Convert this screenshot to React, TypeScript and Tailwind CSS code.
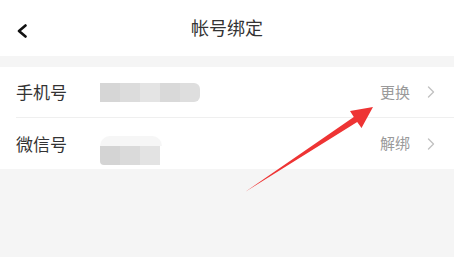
// 帐号绑定 - account binding settings screen

const cjk = { fontFamily: '"Noto Sans CJK SC", "Noto Sans", sans-serif' };

function Chevron() {
  return (
    <svg className="w-[8px] h-[12px]" viewBox="0 0 8 12" fill="none" stroke="#c2c2c2" strokeWidth={1.4}>
      <path d="M1.5 1l5 5-5 5" strokeLinecap="round" strokeLinejoin="round" />
    </svg>
  );
}

function Blur({ shades, rounded, shift }: { shades: string[]; rounded?: boolean; shift?: boolean }) {
  return (
    <div className={`flex flex-col ${shift ? "mt-[13px]" : ""}`}>
      {shift && <div className="h-[10px] w-[62px] rounded-t-[10px] bg-[#f6f6f6]" />}
      <div className={`flex h-[19px] overflow-hidden ${rounded ? "rounded-r-[6px]" : "rounded-bl-[4px]"}`}>
        {shades.map((c, i) => (
          <div key={i} className="w-[20px] h-full" style={{ backgroundColor: c }} />
        ))}
      </div>
    </div>
  );
}

function Row({
  label,
  action,
  shades,
  rounded,
  divider,
  shift,
}: {
  label: string;
  action: string;
  shades: string[];
  rounded?: boolean;
  divider?: boolean;
  shift?: boolean;
}) {
  return (
    <div className="pl-4">
      <div className={`flex items-center h-[51px] pr-[19px] ${divider ? "border-b border-[#efefef]" : ""}`}>
        <span className="w-[84px] text-[17px] text-[#333]">{label}</span>
        <Blur shades={shades} rounded={rounded} shift={shift} />
        <span className="ml-auto text-[15px] text-[#9a9a9a] mr-[17px]">{action}</span>
        <Chevron />
      </div>
    </div>
  );
}

export default function App() {
  return (
    <div className="relative w-[454px] h-[257px] bg-[#f5f5f5] overflow-hidden" style={cjk}>
      <div className="h-[56px] bg-white flex items-center justify-center relative">
        <svg className="absolute left-[16px] top-[24px] w-[12px] h-[14px]" viewBox="0 0 12 14" fill="none" stroke="#111" strokeWidth={2.6}>
          <path d="M9.5 1.5L3 7l6.5 5.5" strokeLinecap="round" strokeLinejoin="round" />
        </svg>
        <span className="text-[18px] text-[#333] -mt-[2px]">帐号绑定</span>
      </div>
      <div className="mt-[11px] bg-white">
        <Row
          label="手机号"
          action="更换"
          shades={["#d6d6d6", "#dcdcdc", "#e4e4e4", "#d9d9d9", "#dedede"]}
          rounded
          divider
        />
        <Row label="微信号" action="解绑" shades={["#d4d4d4", "#dadada", "#e3e3e3"]} shift />
      </div>
      <svg className="absolute left-0 top-0 w-[454px] h-[257px] pointer-events-none" viewBox="0 0 454 257">
        <polygon points="245,192 353.8,117 350,111 373,107 361.5,128 357.2,122" fill="#ee3434" />
      </svg>
    </div>
  );
}
